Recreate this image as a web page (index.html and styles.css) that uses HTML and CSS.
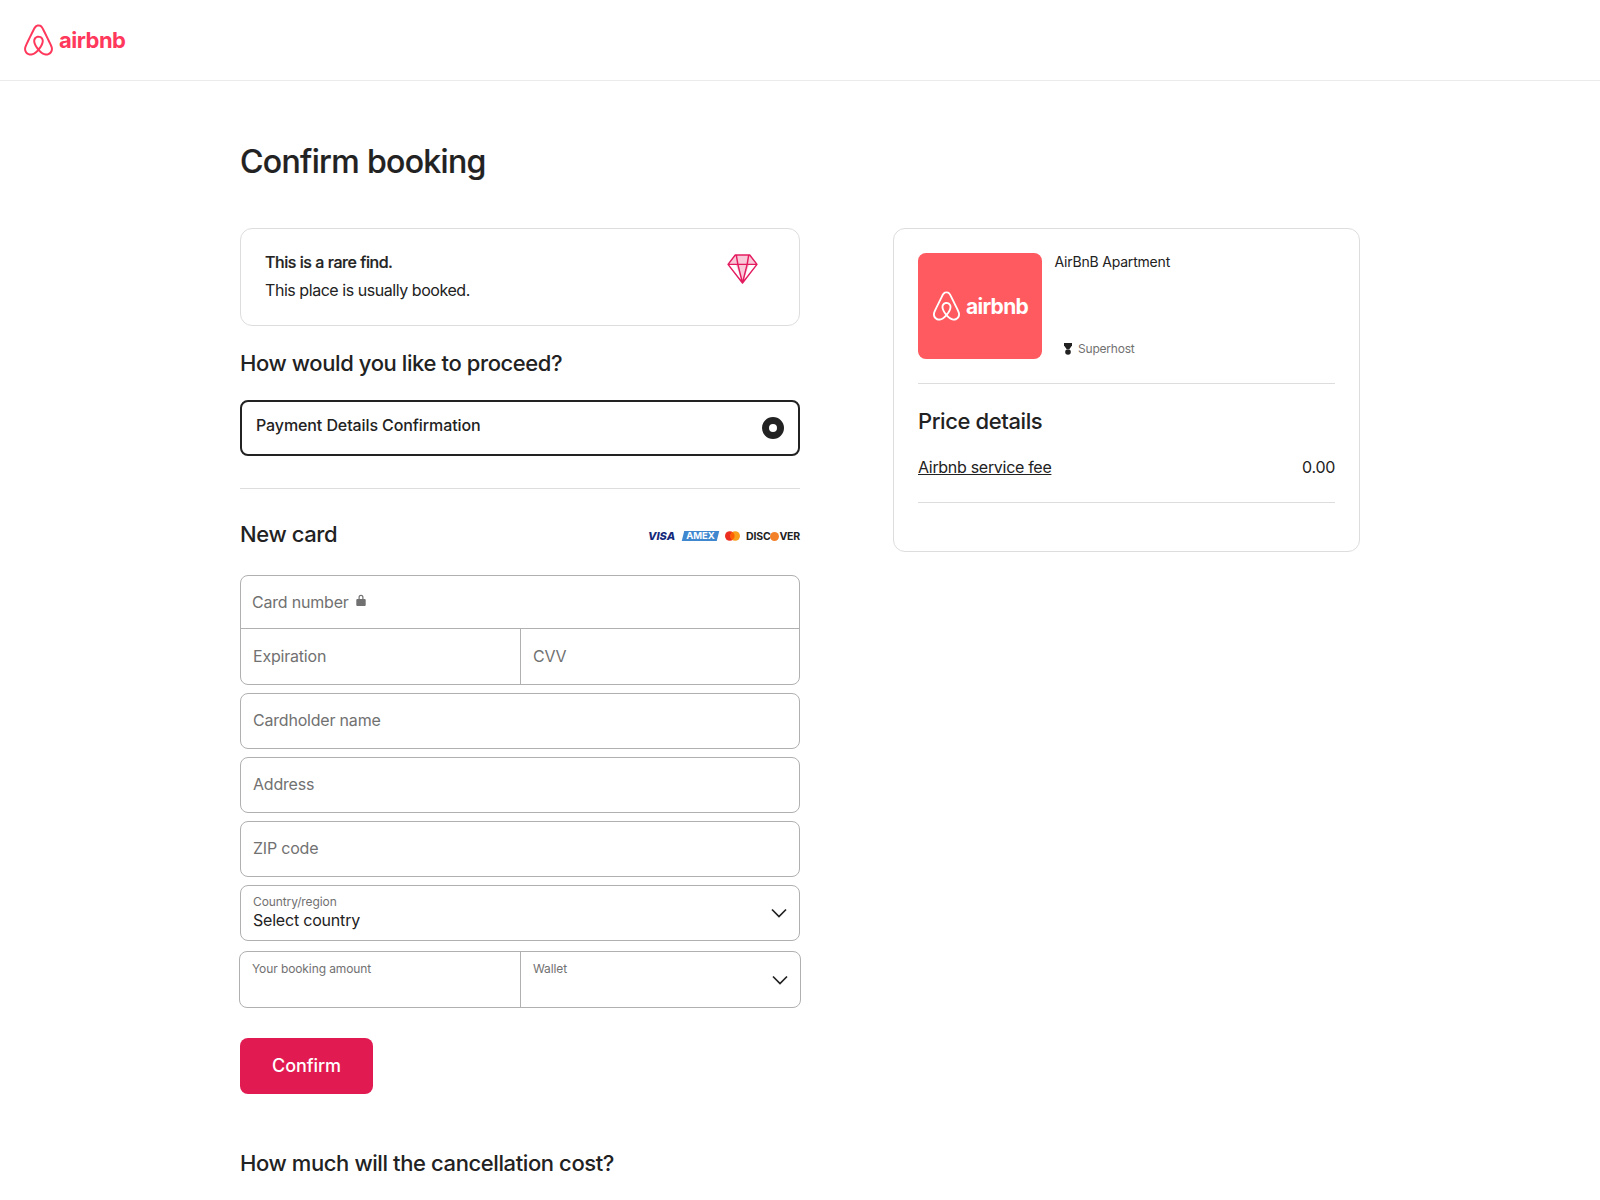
FILE: index.html
```html
<!DOCTYPE html>
<html lang="en">
<head>
<meta charset="utf-8">
<title>Confirm booking</title>
<link rel="stylesheet" href="styles.css">
</head>
<body>
<svg class="defs" width="0" height="0" aria-hidden="true"><defs>
<symbol id="belo" viewBox="0 0 24 24"><path d="M12.001 18.275c-1.353-1.697-2.148-3.184-2.413-4.457-.263-1.027-.16-1.848.291-2.465.477-.71 1.188-1.056 2.121-1.056s1.643.345 2.12 1.063c.446.61.558 1.432.286 2.465-.291 1.298-1.085 2.785-2.412 4.458zm9.601 1.14c-.185 1.246-1.034 2.28-2.2 2.783-2.253.98-4.483-.583-6.392-2.704 3.157-3.951 3.74-7.028 2.385-9.018-.795-1.14-1.933-1.695-3.394-1.695-2.944 0-4.563 2.49-3.927 5.382.37 1.565 1.352 3.343 2.917 5.332-.98 1.085-1.91 1.856-2.732 2.333-.636.344-1.245.558-1.828.609-2.679.399-4.778-2.2-3.825-4.88.132-.345.395-.98.845-1.961l.025-.053c1.464-3.178 3.242-6.79 5.285-10.795l.053-.132.58-1.116c.45-.822.635-1.19 1.351-1.643.346-.21.77-.315 1.246-.315.954 0 1.698.558 2.016 1.007.158.239.345.557.582.953l.558 1.089.08.159c2.041 4.004 3.821 7.608 5.279 10.794l.026.025.533 1.22.318.764c.243.613.294 1.222.213 1.858zm1.22-2.39c-.186-.583-.505-1.271-.9-2.094v-.03c-1.889-4.006-3.642-7.608-5.307-10.844l-.111-.163C15.317 1.461 14.468 0 12.001 0c-2.44 0-3.476 1.695-4.535 3.898l-.081.16c-1.669 3.236-3.421 6.843-5.303 10.847v.053l-.559 1.22c-.21.504-.317.768-.345.847C-.172 20.74 2.611 24 5.98 24c.027 0 .132 0 .265-.027h.372c1.75-.213 3.554-1.325 5.384-3.317 1.829 1.989 3.635 3.104 5.382 3.317h.372c.133.027.239.027.265.027 3.37.003 6.152-3.261 4.802-6.975z"/></symbol>
<symbol id="chev" viewBox="0 0 16 10"><path d="M1 1.500l7 7 7-7" fill="none" stroke="currentColor" stroke-width="1.700"/></symbol>
</defs></svg>

<header class="topbar">
  <div class="brand">
    <svg class="brand-mark"><use href="#belo"/></svg>
    <span class="brand-word">airbnb</span>
  </div>
</header>

<main class="page">
  <h1 class="title">Confirm booking</h1>
  <div class="columns">
    <section class="left">
      <div class="rare">
        <div class="rare-text">
          <div class="rare-head">This is a rare find.</div>
          <div>This place is usually booked.</div>
        </div>
        <svg class="gem" viewBox="0 0 30 29">
          <path d="M8 1h14l7 9L15 28 1 10z" fill="#fff"/>
          <path d="M8 1h14l7 9H1z" fill="#f9c9da"/>
          <path d="M8.500 10h13L15 28z" fill="#f9c9da"/>
          <path d="M8 1h14l7 9L15 28 1 10zM1 10h28M9 1l1.500 9L15 28l4.500-18L21 1" fill="none" stroke="#e31c5f" stroke-width="1.400" stroke-linejoin="round"/>
        </svg>
      </div>

      <h2 class="heading proceed">How would you like to proceed?</h2>

      <div class="option">
        <span class="option-label">Payment Details Confirmation</span>
        <span class="radio"></span>
      </div>

      <hr class="rule rule-option">

      <div class="card-head">
        <h2 class="heading">New card</h2>
        <div class="brands">
          <span class="visa">VISA</span>
          <span class="amex"><span class="amex-text">AMEX</span></span>
          <svg class="mc" viewBox="0 0 15 10"><circle cx="4.800" cy="5" r="4.800" fill="#eb2e1f"/><circle cx="10.200" cy="5" r="4.800" fill="#f79e1b"/><path d="M7.500 1a4.800 4.800 0 0 1 0 8 4.800 4.800 0 0 1 0-8z" fill="#ff5f00"/></svg>
          <span class="discover">DISC<span class="disc-dot"></span>VER</span>
        </div>
      </div>

      <div class="box group">
        <div class="cell cell-number">
          <span class="ph">Card number</span>
          <svg class="lock" viewBox="0 0 10 12"><path d="M2.500 5V3.200a2.500 2.500 0 0 1 5 0V5h1.200a1 1 0 0 1 1 1v5a1 1 0 0 1-1 1H1.300a1 1 0 0 1-1-1V6a1 1 0 0 1 1-1zm1.200 0h2.600V3.200a1.300 1.300 0 0 0-2.600 0z" fill="#717171"/></svg>
        </div>
        <div class="cell-row">
          <div class="cell half"><span class="ph">Expiration</span></div>
          <div class="cell half second"><span class="ph">CVV</span></div>
        </div>
      </div>

      <div class="box single gap-first"><span class="ph">Cardholder name</span></div>
      <div class="box single gap-second"><span class="ph">Address</span></div>
      <div class="box single gap"><span class="ph">ZIP code</span></div>
      <div class="box single select gap">
        <div>
          <div class="mini mini-country">Country/region</div>
          <div class="value">Select country</div>
        </div>
        <svg class="chev"><use href="#chev"/></svg>
      </div>

      <div class="box amount">
        <div class="amount-left"><span class="mini mini-amount">Your booking amount</span></div>
        <div class="amount-right">
          <span class="mini mini-amount">Wallet</span>
          <svg class="chev chev-wallet"><use href="#chev"/></svg>
        </div>
      </div>

      <button class="confirm" type="button">Confirm</button>

      <h2 class="heading cancel">How much will the cancellation cost?</h2>
    </section>

    <aside class="summary">
      <div class="listing">
        <div class="thumb">
          <svg class="thumb-mark"><use href="#belo"/></svg>
          <span class="thumb-word">airbnb</span>
        </div>
        <div class="listing-info">
          <div class="listing-name">AirBnB Apartment</div>
          <div class="superhost">
            <svg class="medal" viewBox="0 0 8 12"><path d="M0 0h8v2.500L5.500 6h-3L0 2.500z" fill="#222"/><circle cx="4" cy="9" r="2.800" fill="#222"/></svg>
            <span>Superhost</span>
          </div>
        </div>
      </div>
      <hr class="rule">
      <h2 class="heading price-title">Price details</h2>
      <div class="fee">
        <span class="fee-name">Airbnb service fee</span>
        <span>0.00</span>
      </div>
      <hr class="rule rule-fee">
    </aside>
  </div>
</main>
</body>
</html>
```

FILE: styles.css
```css
* { box-sizing: border-box; }
html, body { margin: 0; padding: 0; background: #fff; }
body {
  font-family: "Inter", "Liberation Sans", sans-serif;
  font-size: 16px;
  color: #222;
  letter-spacing: -0.2px;
}
.defs { position: absolute; }

.topbar {
  height: 81px;
  border-bottom: 1px solid #ebebeb;
  padding: 24px 23px 0;
}
.brand { display: flex; align-items: center; gap: 5px; color: #ff385c; }
.brand-mark { width: 31px; height: 32px; fill: currentColor; }
.brand-word { font-size: 22px; font-weight: 700; letter-spacing: -0.5px; line-height: 32px; }

.page { padding: 63px 240px 40px; }
.title { margin: 0 0 48px; font-size: 32px; line-height: 36px; font-weight: 500; letter-spacing: -0.65px; -webkit-text-stroke: 0.2px #222; }
.columns { display: flex; gap: 93px; align-items: flex-start; }
.left { width: 560px; flex: none; }

.rare {
  display: flex;
  justify-content: space-between;
  align-items: flex-start;
  height: 98px;
  padding: 19px 41.500px 0 24px;
  border: 1px solid #ddd;
  border-radius: 12px;
  line-height: 28px;
  letter-spacing: -0.45px;
}
.rare-head { font-weight: 500; -webkit-text-stroke: 0.2px #222; }
.gem { width: 31px; height: 30px; margin-top: 5.500px; }

.heading { margin: 0; font-size: 22px; line-height: 26px; font-weight: 500; letter-spacing: -0.4px; }
.proceed { margin-top: 24px; }

.option {
  display: flex;
  align-items: center;
  justify-content: space-between;
  height: 56px;
  margin-top: 24px;
  padding: 0 14px 0 14px;
  border: 2px solid #222;
  border-radius: 8px;
}
.option-label { font-weight: 500; letter-spacing: -0.1px; position: relative; top: -3px; }
.radio { width: 22px; height: 22px; border-radius: 50%; border: 7px solid #222; background: #fff; }

.rule { margin: 0; height: 1px; border: 0; background: #ddd; }
.rule-option { margin-top: 32px; }

.card-head { display: flex; justify-content: space-between; align-items: center; margin-top: 32px; }
.brands { display: flex; align-items: center; position: relative; top: 2px; }
.visa { font-size: 11px; font-weight: 800; font-style: italic; color: #15297a; letter-spacing: 0; margin-right: 8px; }
.amex { display: inline-block; background: #3f88cf; transform: skewX(-14deg); padding: 0 3px; width: 35px; height: 10px; line-height: 10px; text-align: center; margin-right: 7px; }
.amex-text { display: block; transform: skewX(14deg); font-size: 9.500px; font-weight: 700; color: #fff; letter-spacing: 0; }
.mc { width: 15px; height: 10px; margin-right: 6px; }
.discover { font-size: 10.500px; font-weight: 700; color: #222; letter-spacing: -0.2px; display: flex; align-items: center; }
.disc-dot { display: inline-block; width: 9px; height: 9px; border-radius: 50%; background: #f2812a; }

.box { border: 1px solid #b0b0b0; border-radius: 8px; color: #717171; }
.group { margin-top: 28px; height: 110px; }
.cell { display: flex; align-items: center; padding: 0 12px 2px; }
.cell-number { height: 53px; border-bottom: 1px solid #b0b0b0; padding: 0 11px; }
.lock { width: 10px; height: 12px; margin-left: 7px; position: relative; top: -2px; }
.cell-row { display: flex; height: 55px; }
.half { width: 50%; }
.second { border-left: 1px solid #b0b0b0; }

.single { display: flex; align-items: center; height: 55.750px; padding: 0 12px 1.500px; }
.gap-first { margin-top: 8px; }
.gap-second { margin-top: 8.500px; }
.gap { margin-top: 8px; }
.select { justify-content: space-between; color: #222; padding: 0 12px; }
.mini { font-size: 12px; line-height: 16px; color: #717171; letter-spacing: -0.1px; }
.mini-country { line-height: 15px; margin-top: -1px; margin-bottom: 1px; }
.value { line-height: 20px; }
.chev { width: 16px; height: 10px; color: #222; flex: none; }

.amount { display: flex; height: 57px; margin: 10.500px -1px 0; }
.amount-left { width: 50%; padding: 9px 12px; }
.amount-right { flex: 1; display: flex; justify-content: space-between; padding: 9px 12px; border-left: 1px solid #b0b0b0; }
.mini-amount { display: block; }
.chev-wallet { margin-top: 14px; }

.confirm {
  display: block;
  width: 133px;
  height: 56px;
  margin-top: 30px;
  padding: 0 0 2px;
  border: 0;
  border-radius: 8px;
  background: #e11b52;
  color: #fff;
  font: 500 18px "Inter", "Liberation Sans", sans-serif;
  letter-spacing: -0.1px;
}
.cancel { margin-top: 56px; }

.summary { width: 467px; height: 324px; padding: 24px; border: 1px solid #ddd; border-radius: 12px; }
.listing { display: flex; gap: 12.500px; }
.thumb {
  width: 124px;
  height: 106px;
  border-radius: 8px;
  background: #ff5a5f;
  color: #fff;
  display: flex;
  align-items: center;
  justify-content: center;
  gap: 5px;
}
.thumb-mark { width: 29px; height: 30px; fill: currentColor; }
.thumb-word { font-size: 21px; font-weight: 700; letter-spacing: -0.7px; }
.listing-info { display: flex; flex-direction: column; justify-content: space-between; }
.listing-name { font-size: 14px; line-height: 18px; }
.superhost { display: flex; align-items: center; gap: 6px; margin: 0 0 2px 9.500px; font-size: 12px; line-height: 16px; color: #717171; }
.medal { width: 8px; height: 12px; }
.listing + .rule { margin-top: 24px; }
.price-title { margin-top: 23.500px; }
.fee { display: flex; justify-content: space-between; margin-top: 21px; line-height: 24px; letter-spacing: -0.3px; }
.fee-name { text-decoration: underline; }
.rule-fee { margin-top: 23px; }
```
